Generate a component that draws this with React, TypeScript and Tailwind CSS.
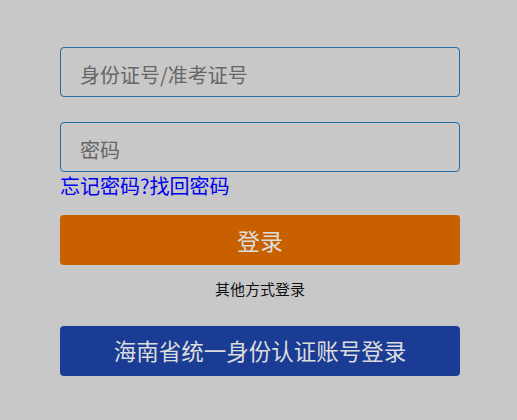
export default function App() {
  return (
    <div className="min-h-[420px] bg-[#c8c8c8] font-['Microsoft_YaHei','Noto_Sans_CJK_SC',sans-serif]">
      <div className="ml-[60px] w-[400px] pt-[47px]">
        <input
          type="text"
          placeholder="身份证号/准考证号"
          className="block h-[50px] w-full rounded-[4px] border border-[#1f6fa6] bg-transparent pl-[19px] pt-[4px] text-[20px] text-[#555] outline-none placeholder:text-[#666]"
        />
        <input
          type="password"
          placeholder="密码"
          className="mt-[25px] block h-[50px] w-full rounded-[4px] border border-[#1f6fa6] bg-transparent pl-[19px] pt-[4px] text-[20px] text-[#555] outline-none placeholder:text-[#666]"
        />
        <div className="leading-[28px]">
          <a href="#" className="text-[20px] text-[#0000ee]">
            忘记密码?找回密码
          </a>
        </div>
        <button className="mt-[14px] block h-[50px] w-full rounded-[4px] bg-[#c86000] text-[23px] text-[#dddddd]">
          登录
        </button>
        <div className="mt-[15px] text-center text-[15px] leading-[18px] text-[#111]">
          其他方式登录
        </div>
        <button className="mt-[28px] block h-[50px] w-full rounded-[4px] bg-[#1a3c94] text-[22.5px] text-[#dddddd]">
          海南省统一身份认证账号登录
        </button>
      </div>
    </div>
  );
}
